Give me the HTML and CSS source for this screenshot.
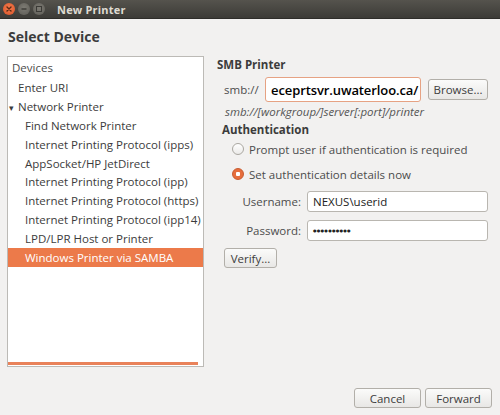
FILE: index.html
```html
<!DOCTYPE html>
<html>
<head>
<meta charset="utf-8">
<link rel="stylesheet" href="styles.css">
</head>
<body>
<div class="window">
  <div class="titlebar">
    <div class="wbtns">
      <span class="wbtn close"><svg width="12" height="12" viewBox="0 0 12 12"><path d="M4 4L8 8M8 4L4 8" stroke="#5a2a14" stroke-width="1.4" stroke-linecap="round"/></svg></span>
      <span class="wbtn min"><svg width="12" height="12" viewBox="0 0 12 12"><path d="M3.5 6H8.5" stroke="#3b3a36" stroke-width="1.4"/></svg></span>
      <span class="wbtn max"><svg width="12" height="12" viewBox="0 0 12 12"><rect x="3.5" y="3.5" width="5" height="5" fill="none" stroke="#3b3a36" stroke-width="1"/></svg></span>
    </div>
    <span class="wtitle">New Printer</span>
  </div>
  <div class="dialog">
    <h1 class="heading">Select Device</h1>
    <div class="content">
      <div class="devlist">
        <div class="devhead">Devices</div>
        <div class="item">Enter URI</div>
        <div class="item expander"><span class="tri">▾</span>Network Printer</div>
        <div class="item child">Find Network Printer</div>
        <div class="item child">Internet Printing Protocol (ipps)</div>
        <div class="item child">AppSocket/HP JetDirect</div>
        <div class="item child">Internet Printing Protocol (ipp)</div>
        <div class="item child">Internet Printing Protocol (https)</div>
        <div class="item child">Internet Printing Protocol (ipp14)</div>
        <div class="item child">LPD/LPR Host or Printer</div>
        <div class="item child selected">Windows Printer via SAMBA</div>
        <div class="spacer"></div>
        <div class="hscroll"></div>
      </div>
      <div class="panel">
        <div class="section-title">SMB Printer</div>
        <div class="smbrow">
          <span class="smblabel">smb://</span>
          <div class="entry focus"><span class="bigtext">eceprtsvr.uwaterloo.ca/</span></div>
          <button class="btn browse">Browse...</button>
        </div>
        <div class="hint">smb://[workgroup/]server[:port]/printer</div>
        <div class="auth-title">Authentication</div>
        <div class="radio r1"><span class="rb"></span><span>Prompt user if authentication is required</span></div>
        <div class="radio r2"><span class="rb on"></span><span>Set authentication details now</span></div>
        <div class="cred">
          <span class="clabel">Username:</span>
          <div class="entry cent">NEXUS\userid</div>
          <span class="clabel">Password:</span>
          <div class="entry cent"><span class="dots">●●●●●●●●●●</span></div>
        </div>
        <button class="btn verify">Verify...</button>
      </div>
    </div>
    <div class="footer">
      <button class="btn fbtn cancel">Cancel</button>
      <button class="btn fbtn forward">Forward</button>
    </div>
  </div>
</div>
</body>
</html>
```
FILE: styles.css
```css
html, body {
  margin: 0;
  padding: 0;
}
body {
  width: 500px;
  height: 415px;
  overflow: hidden;
  background: #f2f1f0;
  font-family: "Open Sans", "DejaVu Sans", sans-serif;
  font-size: 11.5px;
  color: #3c3c3c;
}
.window {
  display: flex;
  flex-direction: column;
  height: 415px;
}
.titlebar {
  height: 19px;
  flex: none;
  display: flex;
  align-items: center;
  background: linear-gradient(#55534d, #3c3b37);
  border-bottom: 1px solid #2e2d2a;
  box-sizing: border-box;
}
.wbtns {
  display: flex;
  gap: 3px;
  margin-left: 3px;
}
.wbtn {
  width: 12px;
  height: 12px;
  border-radius: 50%;
  display: flex;
}
.close { background: radial-gradient(circle at 50% 40%, #f57a4b, #d9542a); }
.min, .max { background: radial-gradient(circle at 50% 40%, #7d7b74, #5d5b55); }
.wtitle {
  margin-left: 12px;
  font-weight: bold;
  font-size: 11px;
  color: #dfdbd2;
  letter-spacing: 0.2px;
}
.dialog {
  flex: 1;
  display: flex;
  flex-direction: column;
  padding: 9px 8px 0 7px;
}
.heading {
  margin: 0;
  font-size: 14px;
  line-height: 18px;
  font-weight: bold;
  color: #3c3c3c;
  padding-left: 1px;
}
.content {
  display: flex;
  margin-top: 10px;
  height: 311px;
}
.devlist {
  width: 197px;
  box-sizing: border-box;
  border: 1px solid #bcbab6;
  background: #fff;
  display: flex;
  flex-direction: column;
}
.devhead {
  height: 21px;
  line-height: 21px;
  padding-left: 4px;
  color: #4c4c4c;
}
.item {
  height: 18.9px;
  line-height: 19px;
  padding-left: 10px;
  white-space: nowrap;
  color: #3c3c3c;
}
.item.expander {
  padding-left: 1px;
}
.tri {
  display: inline-block;
  width: 9px;
  font-size: 9px;
}
.item.child {
  padding-left: 17px;
}
.item.selected {
  background: #ec7a4a;
  color: #fff;
}
.spacer { flex: 1; }
.hscroll {
  height: 3px;
  margin: 0 5px 1px 0;
  background: #e9825a;
}
.panel {
  flex: 1;
  padding-left: 13px;
  display: flex;
  flex-direction: column;
  align-items: flex-start;
}
.section-title {
  font-weight: bold;
  line-height: 16px;
  margin-top: 1px;
}
.smbrow {
  display: flex;
  align-items: center;
  margin-top: 4px;
  margin-left: 7px;
}
.smblabel {
  width: 41px;
  color: #4c4c4c;
}
.entry {
  box-sizing: border-box;
  background: #fff;
  border: 1px solid #b9b6b0;
  border-radius: 3px;
  display: flex;
  align-items: center;
  padding-left: 5px;
  color: #3c3c3c;
}
.entry.focus {
  width: 156px;
  height: 25px;
  border-color: #e6a283;
  overflow: hidden;
}
.bigtext {
  font-size: 13px;
  font-weight: 600;
  color: #000;
  letter-spacing: -0.1px;
  white-space: nowrap;
}
.btn {
  font-family: inherit;
  font-size: 11.5px;
  color: #3c3c3c;
  background: linear-gradient(#fbfbfa, #e8e7e5);
  border: 1px solid #b2afa9;
  border-radius: 3px;
  padding: 0;
  box-sizing: border-box;
}
.browse {
  width: 60px;
  height: 21px;
  margin-left: 7px;
}
.hint {
  font-style: italic;
  color: #555;
  margin-top: 3px;
  margin-left: 8px;
  line-height: 14px;
}
.auth-title {
  font-weight: bold;
  line-height: 16px;
  margin-top: 3px;
  margin-left: 5px;
}
.radio {
  display: flex;
  align-items: center;
  gap: 5px;
  height: 18px;
  margin-left: 15px;
  color: #4c4c4c;
}
.radio.r1 { margin-top: 2px; }
.radio.r2 { margin-top: 7px; }
.rb {
  width: 12px;
  height: 12px;
  box-sizing: border-box;
  border-radius: 50%;
  border: 1px solid #aaa7a1;
  background: linear-gradient(#fff, #ebeae8);
}
.rb.on {
  border: 1px solid #c8592d;
  background: radial-gradient(circle, #fff 0 2px, #e66d3c 2.5px);
}
.cred {
  display: grid;
  grid-template-columns: 84px 181px;
  column-gap: 6px;
  row-gap: 8px;
  margin-top: 8px;
  align-items: center;
}
.clabel {
  text-align: right;
  color: #4c4c4c;
}
.entry.cent {
  height: 21px;
  padding-left: 5px;
  color: #222;
}
.dots {
  font-size: 4px;
  letter-spacing: 0.3px;
}
.verify {
  width: 53px;
  height: 20px;
  margin-top: 7px;
  margin-left: 7px;
}
.footer {
  display: flex;
  justify-content: flex-end;
  gap: 4px;
  margin-top: 21px;
}
.fbtn {
  height: 20px;
}
.cancel { width: 67px; }
.forward { width: 67px; }
```
